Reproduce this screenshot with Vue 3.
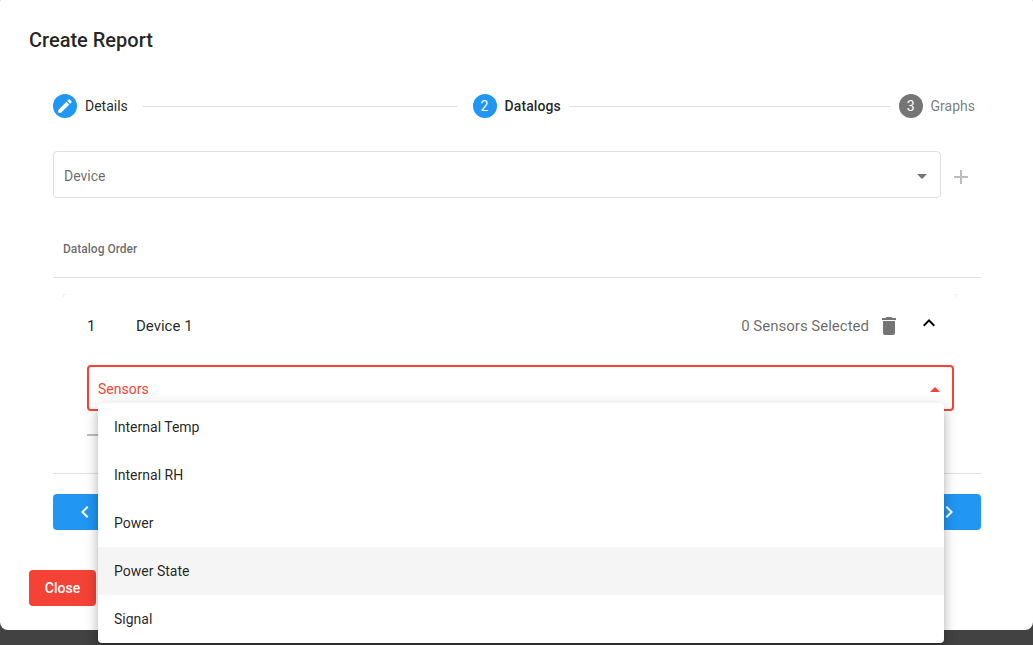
<script setup>
const sensors = ['Internal Temp', 'Internal RH', 'Power', 'Power State', 'Signal']
const hovered = 'Power State'
</script>

<template>
  <div class="screen">
    <section class="dialog">
      <h1 class="title">Create Report</h1>
      <div class="body">
        <div class="stepper">
          <div class="step">
            <span class="dot blue">
              <svg width="18" height="18" viewBox="0 0 24 24"><path fill="#fff" d="M20.71,7.04C21.1,6.65 21.1,6 20.71,5.63L18.37,3.29C18,2.9 17.35,2.9 16.96,3.29L15.12,5.12L18.87,8.87M3,17.25V21H6.75L17.81,9.93L14.06,6.18L3,17.25Z"/></svg>
            </span>
            <span class="step-label">Details</span>
          </div>
          <div class="line first"></div>
          <div class="step">
            <span class="dot blue">2</span>
            <span class="step-label active">Datalogs</span>
          </div>
          <div class="line second"></div>
          <div class="step">
            <span class="dot grey">3</span>
            <span class="step-label muted">Graphs</span>
          </div>
        </div>

        <div class="device-row">
          <div class="field device">
            <span class="field-label">Device</span>
            <svg class="caret" width="24" height="24" viewBox="0 0 24 24"><path fill="#757575" d="M7,10L12,15L17,10H7Z"/></svg>
          </div>
          <svg class="plus" width="24" height="24" viewBox="0 0 24 24"><path fill="#bdbdbd" d="M19,13H13V19H11V13H5V11H11V5H13V11H19V13Z"/></svg>
        </div>

        <div class="table-head">Datalog Order</div>

        <div class="panel">
          <div class="panel-row">
            <span class="index">1</span>
            <span class="name">Device 1</span>
            <span class="count">0 Sensors Selected</span>
            <svg class="trash" width="24" height="24" viewBox="0 0 24 24"><path fill="#757575" d="M19,4H15.5L14.5,3H9.5L8.5,4H5V6H19M6,19A2,2 0 0,0 8,21H16A2,2 0 0,0 18,19V7H6V19Z"/></svg>
            <svg class="chevron" width="24" height="24" viewBox="0 0 24 24"><path fill="#000" d="M7.41,15.41L12,10.83L16.59,15.41L18,14L12,8L6,14L7.41,15.41Z"/></svg>
          </div>
          <div class="field sensors">
            <span class="field-label">Sensors</span>
            <svg class="caret" width="24" height="24" viewBox="0 0 24 24"><path fill="#f44336" d="M7,15L12,10L17,15H7Z"/></svg>
          </div>
          <div class="stub"></div>
        </div>

        <div class="nav">
          <button class="nav-btn">
            <svg width="24" height="24" viewBox="0 0 24 24"><path fill="#fff" d="M15.41,16.58L10.83,12L15.41,7.41L14,6L8,12L14,18L15.41,16.58Z"/></svg>
          </button>
          <button class="nav-btn">
            <svg width="24" height="24" viewBox="0 0 24 24"><path fill="#fff" d="M8.59,16.58L13.17,12L8.59,7.41L10,6L16,12L10,18L8.59,16.58Z"/></svg>
          </button>
        </div>
      </div>
      <div class="footer">
        <button class="close">Close</button>
      </div>
    </section>

    <ul class="menu">
      <li v-for="s in sensors" :key="s" :class="{ hover: s === hovered }">{{ s }}</li>
    </ul>
  </div>
</template>

<style scoped>
.screen {
  position: relative;
  width: 1033px;
  height: 645px;
  overflow: hidden;
  background: #424242;
  font-family: Roboto, sans-serif;
  font-size: 14px;
  color: rgba(0, 0, 0, 0.87);
}
.dialog {
  display: flex;
  flex-direction: column;
  height: 636px;
  margin-top: -6px;
  background: #fff;
  border-radius: 8px;
  box-sizing: border-box;
}
.title {
  margin: 0;
  padding: 0 29px;
  height: 92px;
  line-height: 92px;
  font-size: 20px;
  font-weight: 500;
}
.body {
  padding: 8px 52px 0 53px;
}
.stepper {
  display: flex;
  align-items: center;
  height: 24px;
  padding-right: 6px;
}
.step {
  display: flex;
  align-items: center;
}
.dot {
  display: flex;
  align-items: center;
  justify-content: center;
  width: 24px;
  height: 24px;
  border-radius: 50%;
  color: #fff;
  font-size: 14px;
}
.blue {
  background: #2196f3;
}
.grey {
  background: #757575;
}
.step-label {
  margin-left: 8px;
}
.active {
  font-weight: 500;
  letter-spacing: 0.1px;
}
.muted {
  color: rgba(0, 0, 0, 0.54);
}
.line {
  height: 1px;
  background: #e0e0e0;
}
.line.first {
  flex: 314 1 0;
  margin: 0 16px 0 15px;
}
.line.second {
  flex: 322 1 0;
  margin: 0 8px;
}
.device-row {
  display: flex;
  align-items: center;
  margin-top: 33px;
}
.field {
  display: flex;
  align-items: center;
  justify-content: space-between;
  box-sizing: border-box;
  border-radius: 4px;
}
.device {
  width: 888px;
  height: 47px;
  padding: 3px 6px 0 10px;
  border: 1px solid #e0e0e0;
}
.field-label {
  color: rgba(0, 0, 0, 0.6);
}
.plus {
  margin: 5px 0 0 8px;
}
.table-head {
  margin-top: 23px;
  height: 56px;
  line-height: 57px;
  padding-left: 10px;
  border-bottom: 1px solid #e0e0e0;
  font-size: 12px;
  font-weight: 500;
  color: rgba(0, 0, 0, 0.6);
}
.panel {
  position: relative;
  height: 179px;
  margin: 16px 24px 0 10px;
  padding: 0 3px 0 24px;
  box-sizing: border-box;
}
.panel::before,
.panel::after {
  content: '';
  position: absolute;
  top: 0;
  width: 2px;
  height: 2px;
  border-top: 1px solid #eeeeee;
}
.panel::before {
  left: 0;
  border-left: 1px solid #eeeeee;
  border-top-left-radius: 2px;
}
.panel::after {
  right: 0;
  border-right: 1px solid #eeeeee;
  border-top-right-radius: 2px;
}
.panel-row {
  display: flex;
  align-items: center;
  height: 64px;
  padding-right: 13px;
  font-size: 15px;
}
.index {
  width: 49px;
}
.name {
  flex: 1;
}
.count {
  color: rgba(0, 0, 0, 0.6);
}
.trash {
  margin-left: 8px;
}
.chevron {
  margin: -6px 0 0 16px;
}
.sensors {
  height: 46px;
  margin-top: 7px;
  padding: 1px 5px 0 9px;
  border: 2px solid #f44336;
}
.sensors .field-label {
  color: #f44336;
}
.stub {
  width: 120px;
  height: 2px;
  margin-top: 23px;
  background: #bdbdbd;
}
.nav {
  display: flex;
  justify-content: space-between;
  padding-top: 20px;
  border-top: 1px solid #e0e0e0;
}
.nav-btn {
  display: flex;
  align-items: center;
  justify-content: center;
  width: 64px;
  height: 36px;
  padding: 0;
  border: 0;
  border-radius: 4px;
  background: #2196f3;
}
.footer {
  padding: 40px 29px 0;
}
.close {
  width: 67px;
  height: 36px;
  padding: 0 0 1px;
  border: 0;
  border-radius: 4px;
  background: #f44336;
  color: #fff;
  font-family: inherit;
  font-size: 14px;
  font-weight: 500;
}
.menu {
  position: absolute;
  left: 98px;
  top: 403px;
  width: 846px;
  margin: 0;
  padding: 0;
  list-style: none;
  background: #fff;
  border-radius: 4px;
  box-shadow: 0 5px 5px -3px rgba(0, 0, 0, 0.2), 0 8px 10px 1px rgba(0, 0, 0, 0.14), 0 3px 14px 2px rgba(0, 0, 0, 0.12);
}
.menu li {
  height: 48px;
  line-height: 48px;
  padding-left: 16px;
}
.menu li.hover {
  background: #f5f5f5;
}
</style>
